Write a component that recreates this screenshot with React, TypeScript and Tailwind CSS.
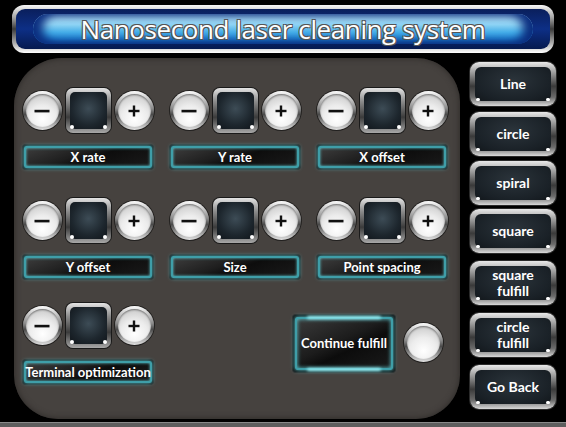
import React from "react";

const labelFont = "font-['Lato','Open_Sans',sans-serif]";

const Sign = ({ plus }: { plus?: boolean }) => (
  <svg width="16" height="16" viewBox="0 0 16 16">
    {plus ? (
      <>
        <rect x="2.5" y="6.8" width="11" height="2.4" fill="#111" />
        <rect x="6.8" y="2.5" width="2.4" height="11" fill="#111" />
      </>
    ) : (
      <rect x="0.5" y="6.8" width="15" height="2.6" fill="#111" />
    )}
  </svg>
);

const RoundBtn = ({ plus }: { plus?: boolean }) => (
  <div className="w-[39px] h-[39px] rounded-full p-[3px] bg-[linear-gradient(180deg,#fbfbfb_0%,#8a8a8a_45%,#4a4a4a_60%,#e2e2e2_100%)] shadow-[0_0_0_1px_#22201f]">
    <div className="w-full h-full rounded-full flex items-center justify-center bg-[radial-gradient(circle_at_50%_75%,#ffffff_0%,#ececec_45%,#bdbdbd_100%)] shadow-[inset_0_1px_2px_rgba(0,0,0,0.45)]">
      <Sign plus={plus} />
    </div>
  </div>
);

const Display = () => (
  <div className="relative w-[45px] h-[45px] rounded-[7px] p-[4px] bg-[linear-gradient(180deg,#e4e4e4_0%,#8b8b8b_30%,#3b3b3b_65%,#a8a8a8_100%)] shadow-[0_0_0_1px_#1a1a1a]">
    <div className="w-full h-full rounded-[5px] bg-[radial-gradient(circle_at_50%_45%,#3d4c56_0%,#1d262d_60%,#10151a_100%)]" />
    <div className="absolute left-[4px] bottom-[4px] w-[4px] h-[4px] rounded-full bg-white" />
    <div className="absolute right-[4px] bottom-[4px] w-[4px] h-[4px] rounded-full bg-white" />
  </div>
);

const Label = ({ text }: { text: string }) => (
  <div className="w-[130px] h-[24px] rounded-[3px] bg-[#121212] p-[1px] shadow-[0_0_0_1px_#2a2827]">
    <div
      className={`h-full rounded-[2px] border-[2px] border-[#3f9ea8] shadow-[0_0_4px_#5fd0d8,inset_0_0_3px_#5fd0d8] bg-[linear-gradient(160deg,#3c3c3c_0%,#1e1e1e_40%,#0d0d0d_55%,#1a1a1a_100%)] flex items-center justify-center text-white font-bold text-[13px] leading-none whitespace-nowrap ${labelFont}`}
    >
      {text}
    </div>
  </div>
);

const Control = ({ label }: { label: string }) => (
  <div className="flex flex-col items-center w-[132px]">
    <div className="flex items-center gap-[4px]">
      <RoundBtn />
      <Display />
      <RoundBtn plus />
    </div>
    <div className="mt-[12px]">
      <Label text={label} />
    </div>
  </div>
);

const SideBtn = ({ lines, className }: { lines: string[]; className: string }) => (
  <div
    className={`relative w-[86px] h-[44px] rounded-[9px] p-[5px] bg-[linear-gradient(180deg,#e8e8e8_0%,#9a9a9a_25%,#3a3a3a_55%,#6a6a6a_80%,#d8d8d8_100%)] shadow-[0_0_0_1px_#2a2a2a] ${className}`}
  >
    <div
      className={`w-full h-full rounded-[6px] bg-[radial-gradient(ellipse_at_50%_40%,#2b343b_0%,#1a2127_70%,#12171b_100%)] flex flex-col items-center justify-center text-white font-bold text-[14px] leading-[16px] ${labelFont}`}
    >
      {lines.map((l) => (
        <span key={l}>{l}</span>
      ))}
    </div>
    <div className="absolute left-[6px] bottom-[5px] w-[4px] h-[3px] rounded-full bg-white" />
    <div className="absolute right-[6px] bottom-[5px] w-[4px] h-[3px] rounded-full bg-white" />
  </div>
);

export default function App() {
  return (
    <div className="w-[566px] h-[427px] bg-black flex flex-col overflow-hidden">
      {/* title */}
      <div className="mx-[12px] mt-[5px] h-[48px] rounded-[12px] p-[4px] bg-[linear-gradient(180deg,#f7f7f7_0%,#a8a8a8_25%,#3a3a3a_50%,#c4c4c4_85%,#ffffff_100%)]">
        <div className="h-full rounded-[9px] bg-[linear-gradient(180deg,#0a1f5c_0%,#0d2f86_50%,#061a4f_100%)] px-[17px] py-[5px]">
          <div className="h-full rounded-full bg-[linear-gradient(180deg,#bfe8fa_0%,#8fd4f4_35%,#46aee8_60%,#1f7fcf_85%,#14549f_100%)] shadow-[inset_10px_0_10px_#0c2f80,inset_-10px_0_10px_#0c2f80] flex items-center justify-center">
            <span className="text-white text-[26px] leading-none font-['Open_Sans',sans-serif] [text-shadow:1px_1px_0_#555,-1px_-1px_0_#555,1px_-1px_0_#555,-1px_1px_0_#555] tracking-[-0.4px]">
              Nanosecond laser cleaning system
            </span>
          </div>
        </div>
      </div>

      <div className="flex mt-[5px]">
        {/* main panel */}
        <div className="ml-[14px] w-[446px] h-[361px] rounded-[44px] rounded-tl-[48px] bg-[#46423f] shadow-[inset_0_0_6px_#2a2725] pt-[30px]">
          <div className="flex flex-col">
            <div className="flex pl-[8px] gap-[15px]">
              <Control label="X rate" />
              <Control label="Y rate" />
              <Control label="X offset" />
            </div>
            <div className="flex pl-[8px] gap-[15px] mt-[29px]">
              <Control label="Y offset" />
              <Control label="Size" />
              <Control label="Point spacing" />
            </div>
            <div className="flex pl-[8px] items-start mt-[24px]">
              <Control label="Terminal optimization" />
              <div className="ml-[139px] mt-[12px] w-[102px] h-[57px] rounded-[3px] bg-[#0f0f0f] p-[2px] shadow-[0_0_0_1px_#2a2827]">
                <div
                  className={`relative h-full rounded-[2px] border-[2px] border-[#3f9ea8] shadow-[0_0_5px_#5fd0d8,inset_0_0_4px_#5fd0d8] bg-[linear-gradient(155deg,#3a3a3a_0%,#1c1c1c_45%,#0c0c0c_60%,#1a1a1a_100%)] flex items-center justify-center text-white font-bold text-[13px] whitespace-nowrap ${labelFont}`}
                >
                  <div className="absolute left-[10px] right-[10px] top-[-3px] h-[3px] rounded-full bg-[#9ff3f8] blur-[1.5px]" />
                  <div className="absolute left-[10px] right-[10px] bottom-[-3px] h-[3px] rounded-full bg-[#9ff3f8] blur-[1.5px]" />
                  Continue fulfill
                </div>
              </div>
              <div className="ml-[9px] mt-[20px] w-[39px] h-[39px] rounded-full p-[3px] bg-[linear-gradient(180deg,#fbfbfb_0%,#8a8a8a_45%,#4a4a4a_60%,#e2e2e2_100%)] shadow-[0_0_0_1px_#22201f]">
                <div className="w-full h-full rounded-full bg-[radial-gradient(circle_at_50%_75%,#ffffff_0%,#ececec_45%,#bdbdbd_100%)] shadow-[inset_0_1px_2px_rgba(0,0,0,0.45)]" />
              </div>
            </div>
          </div>
        </div>

        {/* side buttons */}
        <div className="ml-[10px] flex flex-col">
          <SideBtn lines={["Line"]} className="mt-[4px]" />
          <SideBtn lines={["circle"]} className="mt-[6px]" />
          <SideBtn lines={["spiral"]} className="mt-[5px]" />
          <SideBtn lines={["square"]} className="mt-[4px]" />
          <SideBtn lines={["square", "fulfill"]} className="mt-[8px]" />
          <SideBtn lines={["circle", "fulfill"]} className="mt-[8px]" />
          <SideBtn lines={["Go Back"]} className="mt-[8px]" />
        </div>
      </div>

      <div className="mt-auto h-[5px] bg-[#5e5e5e] border-t border-[#8a8a8a]" />
    </div>
  );
}
